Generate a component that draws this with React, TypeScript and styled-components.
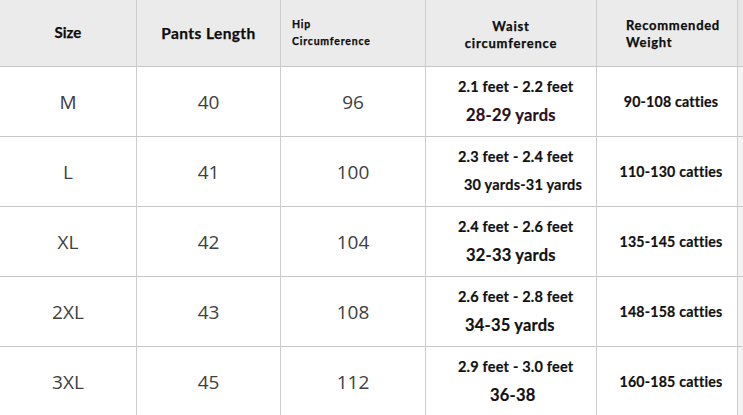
import React from "react";
import styled, { createGlobalStyle } from "styled-components";

const Global = createGlobalStyle`
  html, body { margin: 0; padding: 0; background: #ffffff; overflow: hidden; }
  #root { width: 743px; height: 415px; }
`;

const Table = styled.div`
  display: grid;
  grid-template-columns: 137px 144px 145px 171px 141px 5px;
  grid-template-rows: 67px repeat(5, 70px);
  width: 743px;
  height: 415px;
  overflow: hidden;
  background: #ffffff;
`;

const HeadCell = styled.div<{ $align?: "left" | "center"; $pad?: number; $top?: number }>`
  box-sizing: border-box;
  background: #ebebeb;
  border-right: 1px solid #cdcdcd;
  border-bottom: 1px solid #c6c6c6;
  display: flex;
  flex-direction: column;
  justify-content: center;
  align-items: ${(p) => (p.$align === "left" ? "flex-start" : "center")};
  padding-left: ${(p) => p.$pad ?? 0}px;
  padding-top: ${(p) => p.$top ?? 0}px;
  font-family: "Lato", "Open Sans", sans-serif;
  font-weight: 700;
  color: #0d0d0d;
`;

const HeadText = styled.span<{ $size: number; $ls?: number; $lh?: number }>`
  font-size: ${(p) => p.$size}px;
  letter-spacing: ${(p) => p.$ls ?? 0}px;
  line-height: ${(p) => p.$lh ?? 1.3};
  -webkit-text-stroke: 0.25px #0d0d0d;
`;

const Cell = styled.div`
  box-sizing: border-box;
  border-right: 1px solid #cdcdcd;
  border-bottom: 1px solid #c6c6c6;
  display: flex;
  align-items: center;
  justify-content: center;
`;

const Plain = styled.span`
  font-family: "Open Sans", "Noto Sans", sans-serif;
  font-size: 19px;
  color: #404040;
`;

const WaistCell = styled(Cell)`
  flex-direction: column;
  align-items: flex-start;
  padding-left: 32px;
  padding-bottom: 2px;
  gap: 6px;
  font-family: "Lato", "Open Sans", sans-serif;
  font-weight: 700;
`;

const Feet = styled.span`
  font-size: 14.5px;
  line-height: 22px;
  color: #111;
  letter-spacing: 0.2px;
  -webkit-text-stroke: 0.2px #111;
`;

const Yards = styled.span<{ $indent: number; $color?: string; $size?: number }>`
  margin-left: ${(p) => p.$indent}px;
  font-size: ${(p) => p.$size ?? 16.5}px;
  line-height: 22px;
  color: ${(p) => p.$color ?? "#111"};
  letter-spacing: 0.2px;
  -webkit-text-stroke: 0.2px ${(p) => p.$color ?? "#111"};
`;

const WeightCell = styled(Cell)`
  padding-left: 8px;
  font-family: "Lato", "Open Sans", sans-serif;
  font-weight: 700;
  font-size: 14.2px;
  color: #111;
  letter-spacing: 0.2px;
  -webkit-text-stroke: 0.2px #111;
`;

const Sliver = styled.div<{ $head?: boolean }>`
  background: ${(p) => (p.$head ? "#e6e6e6" : "#f4f4f4")};
  border-bottom: 1px solid #c6c6c6;
  box-sizing: border-box;
`;

type Row = {
  size: string;
  length: string;
  hip: string;
  feet: string;
  yards: string;
  yIndent: number;
  ySize?: number;
  yColor?: string;
  weight: string;
};

const rows: Row[] = [
  { size: "M", length: "40", hip: "96", feet: "2.1 feet - 2.2 feet", yards: "28-29 yards", yIndent: 8, yColor: "#2b1022", weight: "90-108 catties" },
  { size: "L", length: "41", hip: "100", feet: "2.3 feet - 2.4 feet", yards: "30 yards-31 yards", yIndent: 6, ySize: 14.5, weight: "110-130 catties" },
  { size: "XL", length: "42", hip: "104", feet: "2.4 feet - 2.6 feet", yards: "32-33 yards", yIndent: 8, weight: "135-145 catties" },
  { size: "2XL", length: "43", hip: "108", feet: "2.6 feet - 2.8 feet", yards: "34-35 yards", yIndent: 7, weight: "148-158 catties" },
  { size: "3XL", length: "45", hip: "112", feet: "2.9 feet - 3.0 feet", yards: "36-38", yIndent: 32, weight: "160-185 catties" },
];

export default function App() {
  return (
    <>
      <Global />
      <Table>
        <HeadCell $top={-4}>
          <HeadText $size={15}>Size</HeadText>
        </HeadCell>
        <HeadCell $top={-4}>
          <HeadText $size={15.5} $ls={0.4}>Pants Length</HeadText>
        </HeadCell>
        <HeadCell $align="left" $pad={11} $top={-3}>
          <HeadText $size={10.5} $ls={0.8} $lh={1.6}>Hip</HeadText>
          <HeadText $size={10.5} $ls={0.8} $lh={1.6}>Circumference</HeadText>
        </HeadCell>
        <HeadCell $top={3}>
          <HeadText $size={13} $ls={0.8}>Waist</HeadText>
          <HeadText $size={13} $ls={0.8}>circumference</HeadText>
        </HeadCell>
        <HeadCell $align="left" $pad={29} $top={2}>
          <HeadText $size={13} $ls={0.7}>Recommended</HeadText>
          <HeadText $size={13} $ls={0.7}>Weight</HeadText>
        </HeadCell>
        <Sliver $head />
        {rows.map((r) => (
          <React.Fragment key={r.size}>
            <Cell>
              <Plain>{r.size}</Plain>
            </Cell>
            <Cell>
              <Plain>{r.length}</Plain>
            </Cell>
            <Cell>
              <Plain>{r.hip}</Plain>
            </Cell>
            <WaistCell>
              <Feet>{r.feet}</Feet>
              <Yards $indent={r.yIndent} $size={r.ySize} $color={r.yColor}>
                {r.yards}
              </Yards>
            </WaistCell>
            <WeightCell>{r.weight}</WeightCell>
            <Sliver />
          </React.Fragment>
        ))}
      </Table>
    </>
  );
}
